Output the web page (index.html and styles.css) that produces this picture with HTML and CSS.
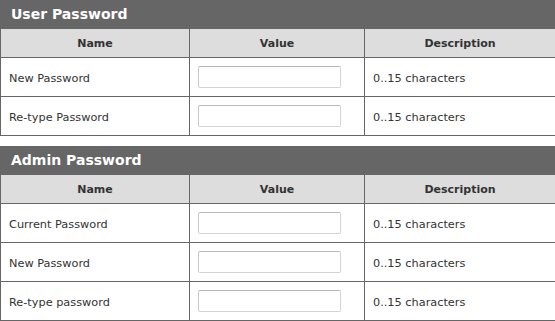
FILE: index.html
```html
<!DOCTYPE html>
<html>
<head>
<meta charset="utf-8">
<link rel="stylesheet" href="styles.css">
</head>
<body>
<div class="page">
  <section class="panel">
    <div class="panel-title">User Password</div>
    <table class="grid">
      <colgroup><col class="c1"><col class="c2"><col class="c3"></colgroup>
      <thead>
        <tr><th>Name</th><th>Value</th><th>Description</th></tr>
      </thead>
      <tbody>
        <tr><td>New Password</td><td class="val"><input type="password" class="field"></td><td>0..15 characters</td></tr>
        <tr><td>Re-type Password</td><td class="val"><input type="password" class="field"></td><td>0..15 characters</td></tr>
      </tbody>
    </table>
  </section>
  <section class="panel">
    <div class="panel-title">Admin Password</div>
    <table class="grid">
      <colgroup><col class="c1"><col class="c2"><col class="c3"></colgroup>
      <thead>
        <tr><th>Name</th><th>Value</th><th>Description</th></tr>
      </thead>
      <tbody>
        <tr><td>Current Password</td><td class="val"><input type="password" class="field"></td><td>0..15 characters</td></tr>
        <tr><td>New Password</td><td class="val"><input type="password" class="field"></td><td>0..15 characters</td></tr>
        <tr><td>Re-type password</td><td class="val"><input type="password" class="field"></td><td>0..15 characters</td></tr>
      </tbody>
    </table>
  </section>
</div>
</body>
</html>
```

FILE: styles.css
```css
html, body {
  margin: 0;
  padding: 0;
  background: #fff;
}
body {
  font-family: "DejaVu Sans", Verdana, sans-serif;
  font-size: 11px;
  color: #333;
}
.page {
  width: 555px;
  display: flex;
  flex-direction: column;
  gap: 10px;
}
.panel-title {
  height: 28px;
  line-height: 28px;
  background: #666;
  color: #fff;
  font-weight: bold;
  font-size: 14px;
  padding-left: 11px;
  box-sizing: border-box;
}
.grid {
  width: 555px;
  border-collapse: collapse;
  table-layout: fixed;
  border: 1px solid #666;
}
.c1 { width: 189px; }
.c2 { width: 175px; }
.c3 { width: 191px; }
.grid th, .grid td {
  border: 1px solid #666;
  padding: 0 8px;
}
.grid th {
  background: #ddd;
  height: 28px;
  font-weight: bold;
  text-align: center;
  color: #333;
}
.grid td {
  height: 36px;
  text-align: left;
  font-size: 11.3px;
  padding-top: 2px;
}
.grid td.val {
  padding-left: 8px;
  padding-top: 1px;
  padding-bottom: 1px;
}
.field {
  display: block;
  width: 143px;
  height: 22px;
  box-sizing: border-box;
  border: 1px solid #d4d4d8;
  border-top-color: #b8b8bc;
  border-left-color: #c8c8cc;
  border-radius: 2px;
  background: #fff;
  margin: 0;
  padding: 0 3px;
}
```
